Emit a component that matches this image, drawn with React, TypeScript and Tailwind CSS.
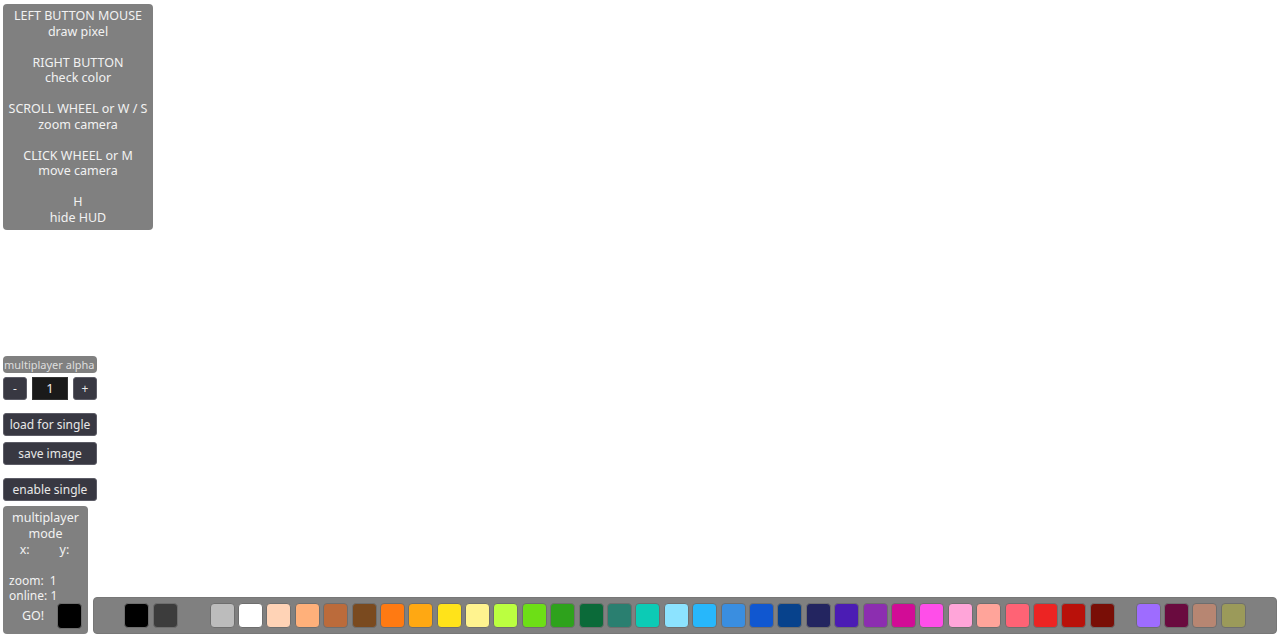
import React from "react";

// palette colours, null = empty slot
const palette: (string | null)[] = [
  null,
  "#000000",
  "#3c3c3c",
  null,
  "#bcbcbc",
  "#ffffff",
  "#ffd3b6",
  "#ffb07a",
  "#bb6b3b",
  "#7a4a1f",
  "#ff7a12",
  "#ffa812",
  "#ffe31a",
  "#fff38f",
  "#bbff40",
  "#6ddf16",
  "#2ea21c",
  "#0b6a39",
  "#2a7f70",
  "#0ccbb5",
  "#8ce3ff",
  "#27b7fb",
  "#3a8ee0",
  "#1057d0",
  "#07428c",
  "#232560",
  "#4b1cb4",
  "#8c2eb0",
  "#d20c96",
  "#ff4ee9",
  "#ffa5d9",
  "#ffa49a",
  "#ff6375",
  "#ec2423",
  "#b9110a",
  "#790e06",
];

const extra = ["#9e6cff", "#6a0b3f", "#b78672", "#9b9a5a"];

const hudLines = [
  ["LEFT BUTTON MOUSE", "draw pixel"],
  ["RIGHT BUTTON", "check color"],
  ["SCROLL WHEEL or W / S", "zoom camera"],
  ["CLICK WHEEL or M", "move camera"],
  ["H", "hide HUD"],
];

function Swatch({ color, className = "" }: { color: string | null; className?: string }) {
  if (!color) return <div className={`w-[25px] h-[25px] shrink-0 ${className}`} />;
  return (
    <div
      className={`w-[25px] h-[25px] shrink-0 rounded-[4px] border border-[#6e6e6e] ${className}`}
      style={{ backgroundColor: color }}
    />
  );
}

function DarkButton({ children, className = "" }: { children: React.ReactNode; className?: string }) {
  return (
    <button
      className={`h-[23px] bg-[#383842] border border-[#5c5c66] rounded-[3px] text-[#e8e8e8] text-[12px] leading-none ${className}`}
    >
      {children}
    </button>
  );
}

export default function App() {
  return (
    <div
      className="h-[640px] w-[1280px] bg-white flex flex-col justify-between overflow-hidden"
      style={{ fontFamily: '"Noto Sans", "Open Sans", sans-serif' }}
    >
      {/* HUD help */}
      <div className="ml-[3px] mt-[4px] w-[150px] h-[226px] bg-[#808080] rounded-[4px] pt-[4px] text-center text-[#f2f2f2] text-[12.5px] leading-[15.5px]">
        {hudLines.map((l, i) => (
          <div key={i} className={i > 0 ? "mt-[15.5px]" : ""}>
            <div className="whitespace-nowrap">{l[0]}</div>
            <div>{l[1]}</div>
          </div>
        ))}
      </div>

      {/* bottom area */}
      <div className="flex flex-col pl-[3px] pr-[3px] pb-[6px]">
        <div className="flex flex-col w-[94px]">
          <div className="h-[17px] bg-[#808080] rounded-[4px] text-[#dedede] text-[11px] leading-[17px] whitespace-nowrap overflow-hidden pl-[1px]">
            multiplayer alpha
          </div>
          <div className="flex justify-between mt-[4px]">
            <DarkButton className="w-[24px]">-</DarkButton>
            <div className="w-[36px] h-[23px] bg-[#1a1a1a] border border-[#333] text-[#eee] text-[13px] flex items-center justify-center">
              1
            </div>
            <DarkButton className="w-[24px]">+</DarkButton>
          </div>
          <DarkButton className="mt-[13px] w-full">load for single</DarkButton>
          <DarkButton className="mt-[6px] w-full">save image</DarkButton>
          <DarkButton className="mt-[13px] w-full">enable single</DarkButton>
        </div>

        <div className="flex items-end mt-[5px]">
          <div className="w-[85px] h-[128px] shrink-0 bg-[#808080] rounded-[4px] text-[#f2f2f2] text-[12.5px] leading-[16px] flex flex-col">
            <div className="text-center pt-[4px]">multiplayer</div>
            <div className="text-center">mode</div>
            <div className="flex justify-center gap-[30px] -ml-[2px]">
              <span>x:</span>
              <span>y:</span>
            </div>
            <div className="mt-[15px] pl-[6px] leading-[15px] text-[12px]">zoom:&nbsp; 1</div>
            <div className="pl-[6px] leading-[15px] text-[12px] whitespace-nowrap">online: 1</div>
            <div className="flex items-center">
              <span className="ml-[19px] w-[30px]">GO!</span>
              <div className="ml-[5px] w-[25px] h-[26px] bg-black rounded-[4px] border border-[#6e6e6e]" />
            </div>
          </div>

          <div className="ml-[5px] flex-1 h-[37px] bg-[#808080] rounded-[4px] border border-[#777] flex items-center pl-[2px] gap-[3.4px]">
            {palette.map((c, i) => (
              <Swatch key={i} color={c} />
            ))}
            {extra.map((c, i) => (
              <Swatch key={"e" + i} color={c} className={i === 0 ? "ml-[17.6px]" : ""} />
            ))}
          </div>
        </div>
      </div>
    </div>
  );
}
